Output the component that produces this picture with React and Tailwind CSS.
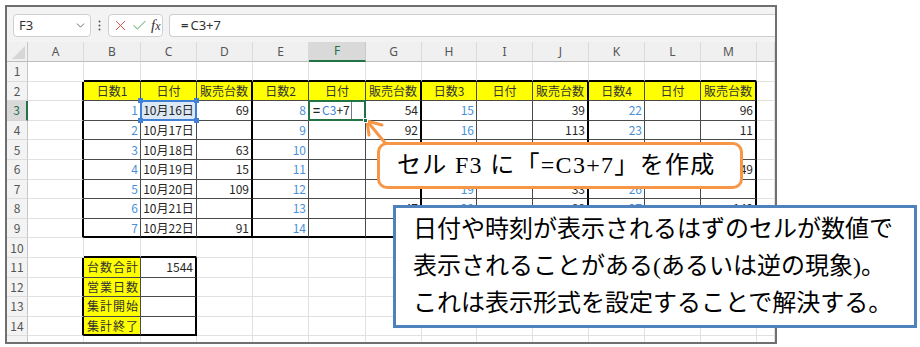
import React from 'react';
import { X, Check, ChevronDown } from 'lucide-react';

const LETTERS = ['A', 'B', 'C', 'D', 'E', 'F', 'G', 'H', 'I', 'J', 'K', 'L', 'M', ''];
const WIDTHS = [
  'w-[56px]', 'w-[57px]', 'w-[56px]', 'w-[56px]', 'w-[56px]', 'w-[57px]', 'w-[56px]',
  'w-[55px]', 'w-[56px]', 'w-[56px]', 'w-[56px]', 'w-[56px]', 'w-[56px]', 'w-[18px]',
];

const HEADERS = ['日数1', '日付', '販売台数', '日数2', '日付', '販売台数', '日数3', '日付', '販売台数', '日数4', '日付', '販売台数'];

// B..M for rows 3-9
const DATA = {
  3: ['1', '10月16日', '69', '8', '', '54', '15', '', '39', '22', '', '96'],
  4: ['2', '10月17日', '', '9', '', '92', '16', '', '113', '23', '', '11'],
  5: ['3', '10月18日', '63', '10', '', '', '17', '', '', '24', '', ''],
  6: ['4', '10月19日', '15', '11', '', '', '18', '', '', '25', '', '49'],
  7: ['5', '10月20日', '109', '12', '', '', '19', '', '33', '26', '', ''],
  8: ['6', '10月21日', '', '13', '', '47', '20', '', '88', '27', '', '140'],
  9: ['7', '10月22日', '91', '14', '', '', '21', '', '', '28', '', ''],
};

const SUMMARY = {
  11: ['台数合計', '1544'],
  12: ['営業日数', ''],
  13: ['集計開始', ''],
  14: ['集計終了', ''],
};

function rightBorder(r, c) {
  const inMain = r >= 2 && r <= 9;
  const inSum = r >= 11 && r <= 14;
  if ((inMain && [0, 3, 6, 9, 12].includes(c)) || (inSum && (c === 0 || c === 2))) return 'border-r-2 border-r-black';
  if ((inMain && c >= 1 && c <= 11) || (inSum && c === 1)) return 'border-r border-r-[#4a4a4a]';
  return 'border-r border-r-[#e1e1e1]';
}

function bottomBorder(r, c) {
  const mainCol = c >= 1 && c <= 12;
  const sumCol = c === 1 || c === 2;
  if (((r === 1 || r === 9) && mainCol) || ((r === 10 || r === 14) && sumCol)) return 'border-b-2 border-b-black';
  if ((r >= 2 && r <= 8 && mainCol) || (r >= 11 && r <= 13 && sumCol)) return 'border-b border-b-[#4a4a4a]';
  return 'border-b border-b-[#e1e1e1]';
}

function Cell({ r, c }) {
  const base = `${WIDTHS[c]} h-full shrink-0 flex items-center relative ${rightBorder(r, c)} ${bottomBorder(r, c)}`;

  // header row of the main table
  if (r === 2 && c >= 1 && c <= 12) {
    return <div className={`${base} justify-center bg-[#ffff00] text-[#333]`}>{HEADERS[c - 1]}</div>;
  }

  if (r >= 3 && r <= 9 && c >= 1 && c <= 12) {
    const v = DATA[r][c - 1];

    if (r === 3 && c === 2) {
      return (
        <div className={`${base} justify-center bg-[#dbe8f6] text-[#262626]`}>
          {v}
          <div className="absolute inset-[-1px] border-2 border-[#3f7fd6] z-10" />
          <div className="absolute left-[-3px] top-[-3px] w-[5px] h-[5px] bg-[#3f7fd6] z-20" />
          <div className="absolute right-[-3px] top-[-3px] w-[5px] h-[5px] bg-[#3f7fd6] z-20" />
          <div className="absolute left-[-3px] bottom-[-3px] w-[5px] h-[5px] bg-[#3f7fd6] z-20" />
          <div className="absolute right-[-3px] bottom-[-3px] w-[5px] h-[5px] bg-[#3f7fd6] z-20" />
        </div>
      );
    }

    if (r === 3 && c === 5) {
      return (
        <div className={`${base} justify-start pl-[4px] bg-white`}>
          <span className="text-[#222] font-bold">=</span>
          <span className="text-[#3f7fd6] ml-[2px]">C3</span>
          <span className="text-[#222]">+7</span>
          <div className="absolute left-[42px] top-0 bottom-0 w-px bg-[#777]" />
          <div className="absolute inset-[-1px] border-2 border-[#217346] z-10" />
          <div className="absolute right-[-3px] bottom-[-3px] w-[5px] h-[5px] bg-[#217346] border border-white z-20" />
        </div>
      );
    }

    const blue = c === 1 || c === 4 || c === 7 || c === 10;
    if (c === 2) {
      return <div className={`${base} justify-center text-[#262626]`}>{v}</div>;
    }
    return (
      <div className={`${base} justify-end pr-[2px] ${blue ? 'text-[#4a90d9]' : 'text-[#262626]'}`}>{v}</div>
    );
  }

  if (r >= 11 && r <= 14 && (c === 1 || c === 2)) {
    const [label, val] = SUMMARY[r];
    if (c === 1) {
      return <div className={`${base} justify-start pl-[3px] bg-[#ffff00] text-[#333] tracking-[1px]`}>{label}</div>;
    }
    return <div className={`${base} justify-end pr-[2px] text-[#262626]`}>{val}</div>;
  }

  return <div className={base} />;
}

function RowHeader({ r }) {
  if (r === 3) {
    return (
      <div className="w-[21px] h-full shrink-0 flex items-center justify-center bg-[#d9d9d9] text-[#217346] border-r-2 border-r-[#217346] border-b border-b-[#d4d4d4]">
        {r}
      </div>
    );
  }
  return (
    <div className="w-[21px] h-full shrink-0 flex items-center justify-center bg-[#f3f3f3] text-[#555] border-r border-r-[#c6c6c6] border-b border-b-[#dcdcdc]">
      {r}
    </div>
  );
}

function FormulaBar() {
  return (
    <div className="h-[35px] shrink-0 bg-[#f3f3f3] flex items-start pt-[7px] pl-[6px] font-['Noto_Sans',sans-serif] text-[13px] text-[#333]">
      <div className="w-[78px] h-[23px] shrink-0 bg-white border border-[#cfcfcf] rounded-[4px] flex items-center justify-between pl-[5px] pr-[3px]">
        <span>F3</span>
        <ChevronDown size={13} strokeWidth={1.6} className="text-[#555]" />
      </div>
      <div className="w-[17px] h-[23px] shrink-0 flex items-center justify-center">
        <svg width="3" height="11" viewBox="0 0 3 11">
          <circle cx="1.5" cy="1.5" r="1" fill="#555" />
          <circle cx="1.5" cy="5.5" r="1" fill="#555" />
          <circle cx="1.5" cy="9.5" r="1" fill="#555" />
        </svg>
      </div>
      <div className="w-[55px] h-[23px] shrink-0 bg-white border border-[#cfcfcf] rounded-[4px] flex items-center pl-[3px] gap-[2px]">
        <X size={17} strokeWidth={1.4} className="text-[#e2504a]" />
        <Check size={17} strokeWidth={1.4} className="text-[#52a060]" />
        <span className="font-['Liberation_Serif',serif] italic text-[15px] text-[#333] leading-none ml-[1px]">
          f<span className="text-[12px]">x</span>
        </span>
      </div>
      <div className="flex-1 h-[23px] ml-[6px] bg-white border border-r-0 border-[#cfcfcf] rounded-l-[4px] flex items-center pl-[11px]">
        <span className="font-bold">=</span>
        <span className="ml-[2px]">C3+7</span>
      </div>
    </div>
  );
}

function ColumnHeaders() {
  return (
    <div className="h-[20px] shrink-0 flex font-['Noto_Sans',sans-serif] text-[12px] text-[#555]">
      <div className="w-[21px] h-full shrink-0 bg-[#f0f0f0] border-r border-r-[#c6c6c6] border-b border-b-[#bdbdbd] flex items-end justify-end p-[2px]">
        <svg width="13" height="13" viewBox="0 0 13 13">
          <polygon points="13,0 13,13 0,13" fill="#d6d6d6" />
        </svg>
      </div>
      {LETTERS.map((l, c) =>
        c === 5 ? (
          <div
            key={c}
            className={`${WIDTHS[c]} h-full shrink-0 flex items-center justify-center bg-[#d9d9d9] text-[#217346] border-r border-r-[#c9c9c9] border-b-2 border-b-[#217346]`}
          >
            {l}
          </div>
        ) : (
          <div
            key={c}
            className={`${WIDTHS[c]} h-full shrink-0 flex items-center justify-center bg-[#f0f0f0] border-r border-r-[#dadada] border-b border-b-[#bdbdbd]`}
          >
            {l}
          </div>
        )
      )}
    </div>
  );
}

export default function App() {
  const rows = Array.from({ length: 15 }, (_, i) => i + 1);

  return (
    <div className="relative w-[920px] h-[347px] bg-white overflow-hidden">
      {/* Excel window */}
      <div className="ml-[5px] mt-[5px] w-[772px] h-[339px] border-2 border-[#6f6f6f] overflow-hidden flex flex-col bg-white">
        <FormulaBar />
        <ColumnHeaders />
        <div className="flex flex-col font-['Noto_Sans_CJK_JP',sans-serif] text-[12px]">
          {rows.map((r) => (
            <div key={r} className="h-[19.6px] shrink-0 flex">
              <RowHeader r={r} />
              {LETTERS.map((_, c) => (
                <Cell key={c} r={r} c={c} />
              ))}
            </div>
          ))}
        </div>
      </div>

      {/* orange callout pointer */}
      <svg className="absolute left-[360px] top-[114px]" width="40" height="34" viewBox="0 0 40 34">
        <g stroke="#f79646" strokeWidth="3" strokeLinecap="round" fill="none">
          <line x1="7" y1="7" x2="26" y2="30" />
          <polyline points="22,11 7,7 9,21" />
        </g>
      </svg>

      {/* orange callout */}
      <div className="absolute left-[377px] top-[142px] w-[366px] h-[47px] bg-white border-[3px] border-[#f79646] rounded-[10px] flex items-center pl-[17px] pb-px font-['Liberation_Serif','Noto_Sans_CJK_JP',serif] text-[24px] tracking-[1.3px] text-black whitespace-nowrap">
        セル F3 に「=C3+7」を作成
      </div>

      {/* blue note */}
      <div className="absolute left-[393px] top-[205px] w-[524px] h-[123px] bg-white border-[3px] border-[#4f81bd] pl-[17px] pt-[3px] font-['Liberation_Serif','Noto_Sans_CJK_JP',serif] text-[24px] leading-[37px] text-black whitespace-nowrap">
        <div>日付や時刻が表示されるはずのセルが数値で</div>
        <div>表示されることがある(あるいは逆の現象)。</div>
        <div>これは表示形式を設定することで解決する。</div>
      </div>
    </div>
  );
}
